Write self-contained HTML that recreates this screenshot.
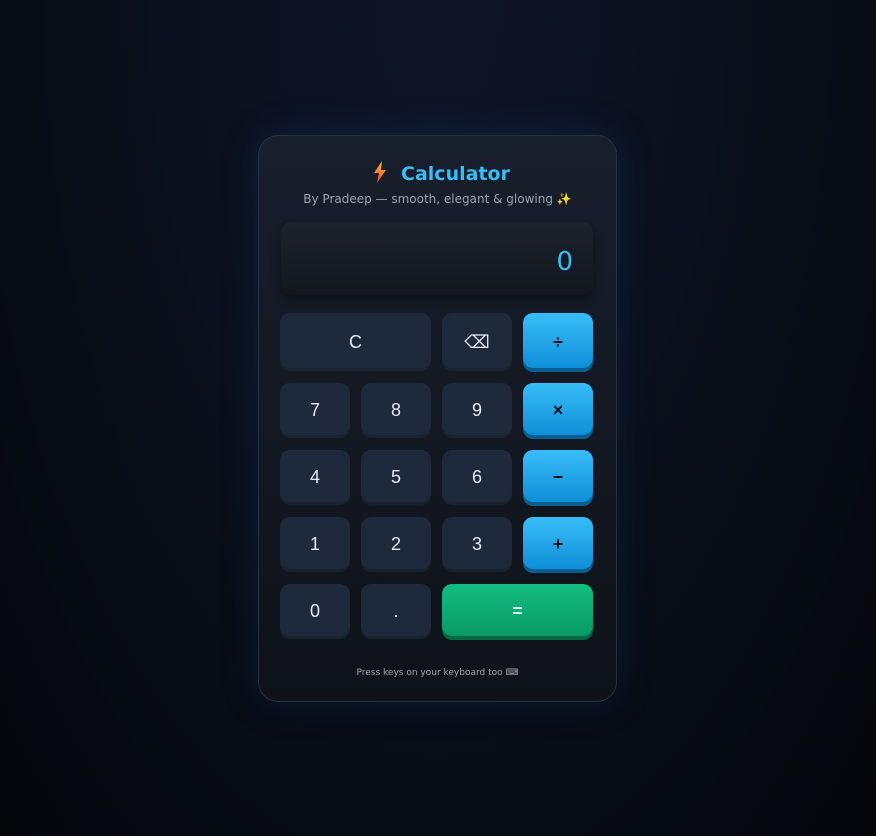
<!DOCTYPE html>
<html><head><meta charset="utf-8"><style>
html,body{margin:0;width:876px;height:836px;overflow:hidden}
body{background:radial-gradient(ellipse at 50% 0%,#0f1628 0%,#0a101c 45%,#04060a 100%);font-family:"Liberation Sans","Noto Sans CJK SC",sans-serif;position:relative}
.card{position:absolute;left:258px;top:135px;width:357px;height:565px;border:1px solid #263041;border-radius:20px;background:linear-gradient(180deg,#181f2c 0%,#121720 60%,#0f1319 100%);box-shadow:0 0 40px rgba(30,90,160,.18)}
.title{position:absolute;top:161px;left:262px;width:359px;text-align:center;font:bold 19px "DejaVu Sans",sans-serif;color:#38bdf8}
.title svg{vertical-align:-3px;margin-right:14px}
.sub{position:absolute;top:192px;left:258px;width:359px;text-align:center;font:12px "DejaVu Sans",sans-serif;color:#9aa3b2}
.disp{position:absolute;left:281px;top:222px;width:312px;height:73px;border-radius:10px;background:linear-gradient(180deg,#1c222c,#13171d);box-shadow:0 4px 10px rgba(0,0,0,.4)}
.disp span{position:absolute;right:20px;top:25px;font:26px "DejaVu Sans",sans-serif;color:#38bdf8}
.b{position:absolute;width:70px;height:52px;border-radius:10px;background:#1e293b;box-shadow:0 3px 0 #19222f;color:#e5e9f0;font-size:18px;display:flex;align-items:center;justify-content:center;box-sizing:border-box;padding-top:3px}
.op{background:linear-gradient(180deg,#38bdf8,#0f8fd8);box-shadow:0 4px 0 #0b5e90;color:#0b1220;font-weight:bold}
.eq{background:linear-gradient(180deg,#12bd80,#0a9a68);box-shadow:0 4px 0 #076848;color:#e8fff5;font-weight:bold}
.foot{position:absolute;top:668px;left:258px;width:359px;text-align:center;font:9px "DejaVu Sans",sans-serif;color:#a0a8b5}
</style></head><body>
<div class="card"></div>
<div class="title"><svg width="14" height="22" viewBox="0 0 14 22"><defs><linearGradient id="g" x1="0" y1="0" x2="0" y2="1"><stop offset="0" stop-color="#fbbf24"/><stop offset="1" stop-color="#ef4444"/></linearGradient></defs><path d="M9 0 L1 12 H6 L4 22 L13 9 H8 Z" fill="url(#g)"/></svg>Calculator</div>
<div class="sub">By Pradeep — smooth, elegant &amp; glowing <span style="color:#fbbf24">✨</span></div>
<div class="disp"><span>0</span></div>
<div class="b" style="left:280px;top:313px;width:151px;height:55px">C</div>
<div class="b" style="left:442px;top:313px;height:55px">⌫</div>
<div class="b op" style="left:523px;top:313px;height:55px">÷</div>
<div class="b" style="left:280px;top:383px">7</div><div class="b" style="left:361px;top:383px">8</div><div class="b" style="left:442px;top:383px">9</div><div class="b op" style="left:523px;top:383px">×</div>
<div class="b" style="left:280px;top:450px">4</div><div class="b" style="left:361px;top:450px">5</div><div class="b" style="left:442px;top:450px">6</div><div class="b op" style="left:523px;top:450px">−</div>
<div class="b" style="left:280px;top:517px">1</div><div class="b" style="left:361px;top:517px">2</div><div class="b" style="left:442px;top:517px">3</div><div class="b op" style="left:523px;top:517px">+</div>
<div class="b" style="left:280px;top:584px">0</div><div class="b" style="left:361px;top:584px">.</div><div class="b eq" style="left:442px;top:584px;width:151px">=</div>
<div class="foot">Press keys on your keyboard too ⌨</div>
</body></html>
